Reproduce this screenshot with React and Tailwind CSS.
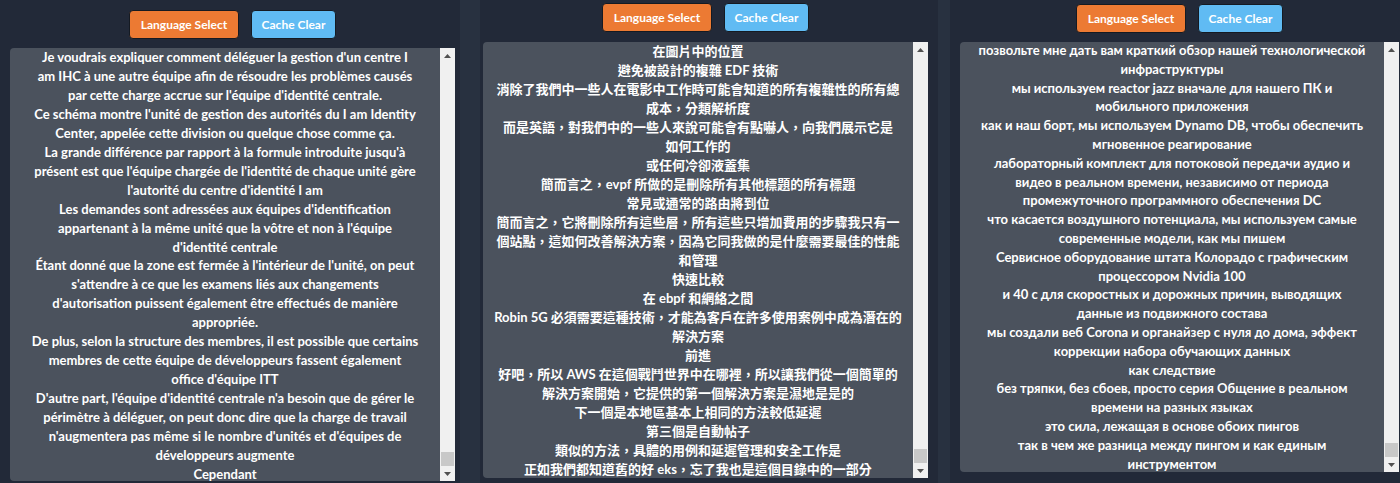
import React from 'react';

const french = [
  ["Je voudrais expliquer comment déléguer la gestion d'un centre I", "am IHC à une autre équipe afin de résoudre les problèmes causés", "par cette charge accrue sur l'équipe d'identité centrale."],
  ["Ce schéma montre l'unité de gestion des autorités du I am Identity", "Center, appelée cette division ou quelque chose comme ça."],
  ["La grande différence par rapport à la formule introduite jusqu'à", "présent est que l'équipe chargée de l'identité de chaque unité gère", "l'autorité du centre d'identité I am"],
  ["Les demandes sont adressées aux équipes d'identification", "appartenant à la même unité que la vôtre et non à l'équipe", "d'identité centrale"],
  ["Étant donné que la zone est fermée à l'intérieur de l'unité, on peut", "s'attendre à ce que les examens liés aux changements", "d'autorisation puissent également être effectués de manière", "appropriée."],
  ["De plus, selon la structure des membres, il est possible que certains", "membres de cette équipe de développeurs fassent également", "office d'équipe ITT"],
  ["D'autre part, l'équipe d'identité centrale n'a besoin que de gérer le", "périmètre à déléguer, on peut donc dire que la charge de travail", "n'augmentera pas même si le nombre d'unités et d'équipes de", "développeurs augmente"],
  ["Cependant"],
];

const chinese = [
  ["在圖片中的位置"],
  ["避免被設計的複雜 EDF 技術"],
  ["消除了我們中一些人在電影中工作時可能會知道的所有複雜性的所有總", "成本，分類解析度"],
  ["而是英語，對我們中的一些人來說可能會有點嚇人，向我們展示它是", "如何工作的"],
  ["或任何冷卻液蓋集"],
  ["簡而言之，evpf 所做的是刪除所有其他標題的所有標題"],
  ["常見或通常的路由將到位"],
  ["簡而言之，它將刪除所有這些層，所有這些只增加費用的步驟我只有一", "個站點，這如何改善解決方案，因為它同我做的是什麼需要最佳的性能", "和管理"],
  ["快速比較"],
  ["在 ebpf 和網絡之間"],
  ["Robin 5G 必須需要這種技術，才能為客戶在許多使用案例中成為潛在的", "解決方案"],
  ["前進"],
  ["好吧，所以 AWS 在這個戰鬥世界中在哪裡，所以讓我們從一個簡單的", "解決方案開始，它提供的第一個解決方案是濕地是是的"],
  ["下一個是本地區基本上相同的方法較低延遲"],
  ["第三個是自動帖子"],
  ["類似的方法，具體的用例和延遲管理和安全工作是"],
  ["正如我們都知道舊的好 eks，忘了我也是這個目錄中的一部分"],
];

const russian = [
  ["позвольте мне дать вам краткий обзор нашей технологической", "инфраструктуры"],
  ["мы используем reactor jazz вначале для нашего ПК и", "мобильного приложения"],
  ["как и наш борт, мы используем Dynamo DB, чтобы обеспечить", "мгновенное реагирование"],
  ["лабораторный комплект для потоковой передачи аудио и", "видео в реальном времени, независимо от периода", "промежуточного программного обеспечения DC"],
  ["что касается воздушного потенциала, мы используем самые", "современные модели, как мы пишем"],
  ["Сервисное оборудование штата Колорадо с графическим", "процессором Nvidia 100"],
  ["и 40 с для скоростных и дорожных причин, выводящих", "данные из подвижного состава"],
  ["мы создали веб Corona и органайзер с нуля до дома, эффект", "коррекции набора обучающих данных"],
  ["как следствие"],
  ["без тряпки, без сбоев, просто серия Общение в реальном", "времени на разных языках"],
  ["это сила, лежащая в основе обоих пингов"],
  ["так в чем же разница между пингом и как единым", "инструментом"],
];

const Arrow = ({ down }) => (
  <div className="h-[15px] flex items-center justify-center">
    <svg width="7" height="4" viewBox="0 0 7 4">
      {down ? <polygon points="0,0 7,0 3.5,4" fill="#505050" /> : <polygon points="0,4 7,4 3.5,0" fill="#505050" />}
    </svg>
  </div>
);

const Column = ({ paragraphs, wrap, panel, shift, font }) => {
  return (
    <div className={wrap}>
      {/* Buttons */}
      <div className="flex justify-center gap-3 font-['Lato',sans-serif]">
        <button className="w-[110px] h-[29px] rounded-[4px] border border-[#151a22] bg-[#ec7a33] text-white text-[12px] font-bold">
          Language Select
        </button>
        <button className="w-[85px] h-[29px] rounded-[4px] border border-[#151a22] bg-[#60bbf3] text-white text-[12px] font-bold">
          Cache Clear
        </button>
      </div>

      {/* Text panel */}
      <div className={`flex rounded-l-[4px] bg-[#4b525d] overflow-hidden ${panel}`}>
        <div className="flex-1 overflow-hidden">
          <div className={`text-center text-white font-bold text-[13px] ${font} ${shift}`}>
            {paragraphs.map((p, i) => (
              <p key={i}>
                {p.map((line, j) => (
                  <span key={j} className="block whitespace-nowrap">{line}</span>
                ))}
              </p>
            ))}
          </div>
        </div>
        <div className="w-[15px] flex flex-col bg-[#f0f0f0]">
          <Arrow />
          <div className="flex-1 flex flex-col">
            <div className="mt-auto mx-[1px] h-[14px] bg-[#c8c8c8]" />
          </div>
          <Arrow down />
        </div>
      </div>
    </div>
  );
};

export default function App() {
  return (
    <div className="w-[1400px] h-[483px] overflow-hidden flex bg-[#283140]">
      <div className="w-[460px] bg-[#222938] pt-[10px]">
        <Column
          paragraphs={french}
          wrap="ml-[10px] w-[445px]"
          panel="mt-[9px] h-[433px]"
          shift="leading-[18.95px]"
          font="font-['Lato',sans-serif]"
        />
      </div>
      <div className="w-[458px] ml-[20px] bg-[#222938] pt-[3px]">
        <Column
          paragraphs={chinese}
          wrap="ml-[3px] w-[445px]"
          panel="mt-[10px] h-[436px]"
          shift="leading-[19px]"
          font="font-['Lato','Noto_Sans_CJK_TC',sans-serif]"
        />
      </div>
      <div className="flex-1 ml-[12px] bg-[#222938] pt-[4px]">
        <Column
          paragraphs={russian}
          wrap="ml-[10px] w-[439px]"
          panel="mt-[9px] h-[430px]"
          shift="-mt-[1px] leading-[18.8px]"
          font="font-['Lato',sans-serif]"
        />
      </div>
    </div>
  );
}
